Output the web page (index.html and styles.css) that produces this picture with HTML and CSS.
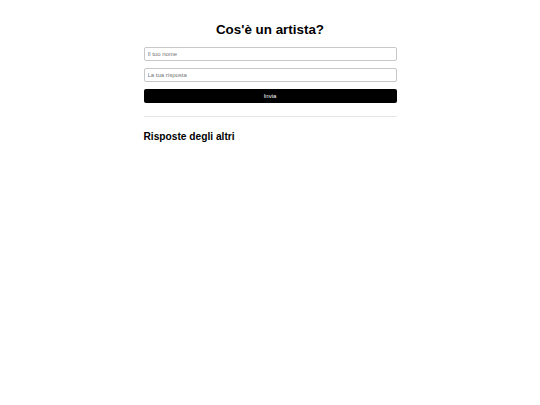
FILE: index.html
```
<!DOCTYPE html>
<html lang="it">
<head>
<meta charset="utf-8">
<title>Cos'è un artista?</title>
<link rel="stylesheet" href="styles.css">
</head>
<body>
<main class="page">
  <h1 class="title">Cos'è un artista?</h1>
  <form class="form">
    <input class="field" type="text" placeholder="Il tuo nome">
    <input class="field" type="text" placeholder="La tua risposta">
    <button class="send" type="button">Invia</button>
  </form>
  <hr class="divider">
  <h2 class="subtitle">Risposte degli altri</h2>
</main>
</body>
</html>
```
FILE: styles.css
```
html, body {
  margin: 0;
  padding: 0;
  background: #ffffff;
}
body {
  font-family: "Liberation Sans", Arial, sans-serif;
  color: #000;
}
.page {
  width: 253px;
  margin: 0 auto;
  padding-top: 22px;
}
.title {
  margin: 0;
  font-size: 13.4px;
  line-height: 16px;
  font-weight: bold;
  text-align: center;
}
.form {
  display: flex;
  flex-direction: column;
  gap: 7px;
  margin-top: 9px;
}
.field {
  box-sizing: border-box;
  width: 100%;
  height: 14px;
  margin: 0;
  padding: 0 3px;
  border: 1px solid #c8c8c8;
  border-radius: 2px;
  background: #fff;
  font-family: "Liberation Sans", Arial, sans-serif;
  font-size: 6px;
  color: #000;
}
.field::placeholder {
  color: #757575;
}
.send {
  box-sizing: border-box;
  width: 100%;
  height: 13.5px;
  margin: 0;
  padding: 0;
  border: none;
  border-radius: 2px;
  background: #000;
  color: #fff;
  font-family: "Liberation Sans", Arial, sans-serif;
  font-size: 6px;
}
.divider {
  margin: 13px 0 0;
  border: none;
  border-top: 1px solid #e6e6e6;
  height: 0;
}
.subtitle {
  margin: 14px 0 0;
  font-size: 10.2px;
  line-height: 12px;
  font-weight: bold;
}
```
